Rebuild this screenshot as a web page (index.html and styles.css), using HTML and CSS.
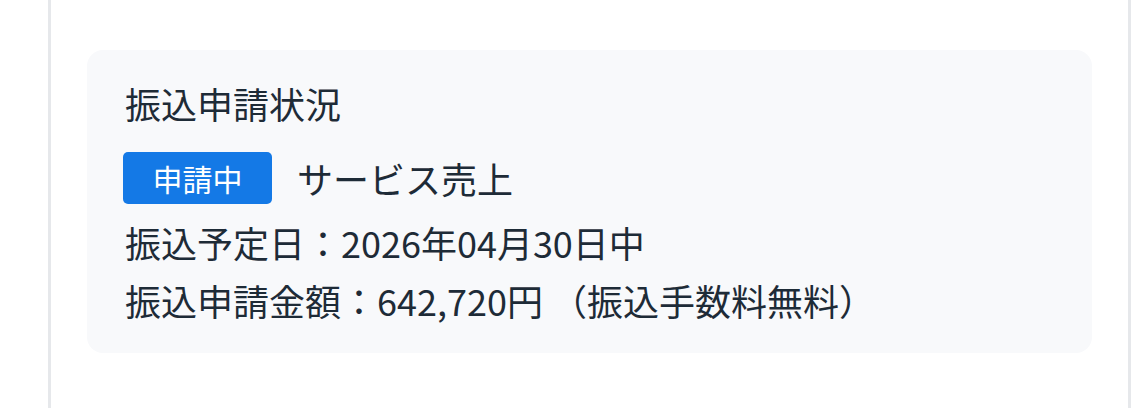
FILE: index.html
```html
<!DOCTYPE html>
<html lang="ja">
<head>
<meta charset="utf-8">
<title>振込申請状況</title>
<link rel="stylesheet" href="styles.css">
</head>
<body>
<div class="page">
  <section class="card">
    <h2 class="title">振込申請状況</h2>
    <div class="status-row">
      <span class="badge">申請中</span>
      <span class="kind">サービス売上</span>
    </div>
    <p class="line">振込予定日：2026年04月30日中</p>
    <p class="line">振込申請金額：642,720円 （振込手数料無料）</p>
  </section>
</div>
</body>
</html>
```

FILE: styles.css
```css
html, body {
  margin: 0;
  padding: 0;
  background: #ffffff;
  overflow: hidden;
}
body {
  font-family: "Noto Sans CJK JP", "Noto Sans", sans-serif;
  color: #1e2b37;
}
.page {
  margin-left: 48px;
  width: 1005px;
  height: 358px;
  border-left: 3px solid #e6e8eb;
  border-right: 3px solid #e6e8eb;
  padding: 50px 36px 0 36px;
}
.card {
  background: #f8f9fb;
  border-radius: 16px;
  padding: 24px 36px 24px 38px;
  height: 255px;
}
.title {
  margin: 0;
  font-size: 36px;
  font-weight: 400;
  line-height: 58px;
}
.status-row {
  display: flex;
  align-items: center;
  margin-top: 20px;
  height: 52px;
}
.badge {
  display: inline-flex;
  align-items: center;
  justify-content: center;
  width: 149px;
  height: 52px;
  margin-left: -2px;
  background: #1479e6;
  color: #ffffff;
  font-size: 30px;
  border-radius: 5px;
}
.kind {
  margin-left: 25px;
  font-size: 36px;
  line-height: 52px;
}
.line {
  margin: 0;
  font-size: 36px;
  line-height: 58px;
}
.status-row + .line {
  margin-top: 9px;
}
```
